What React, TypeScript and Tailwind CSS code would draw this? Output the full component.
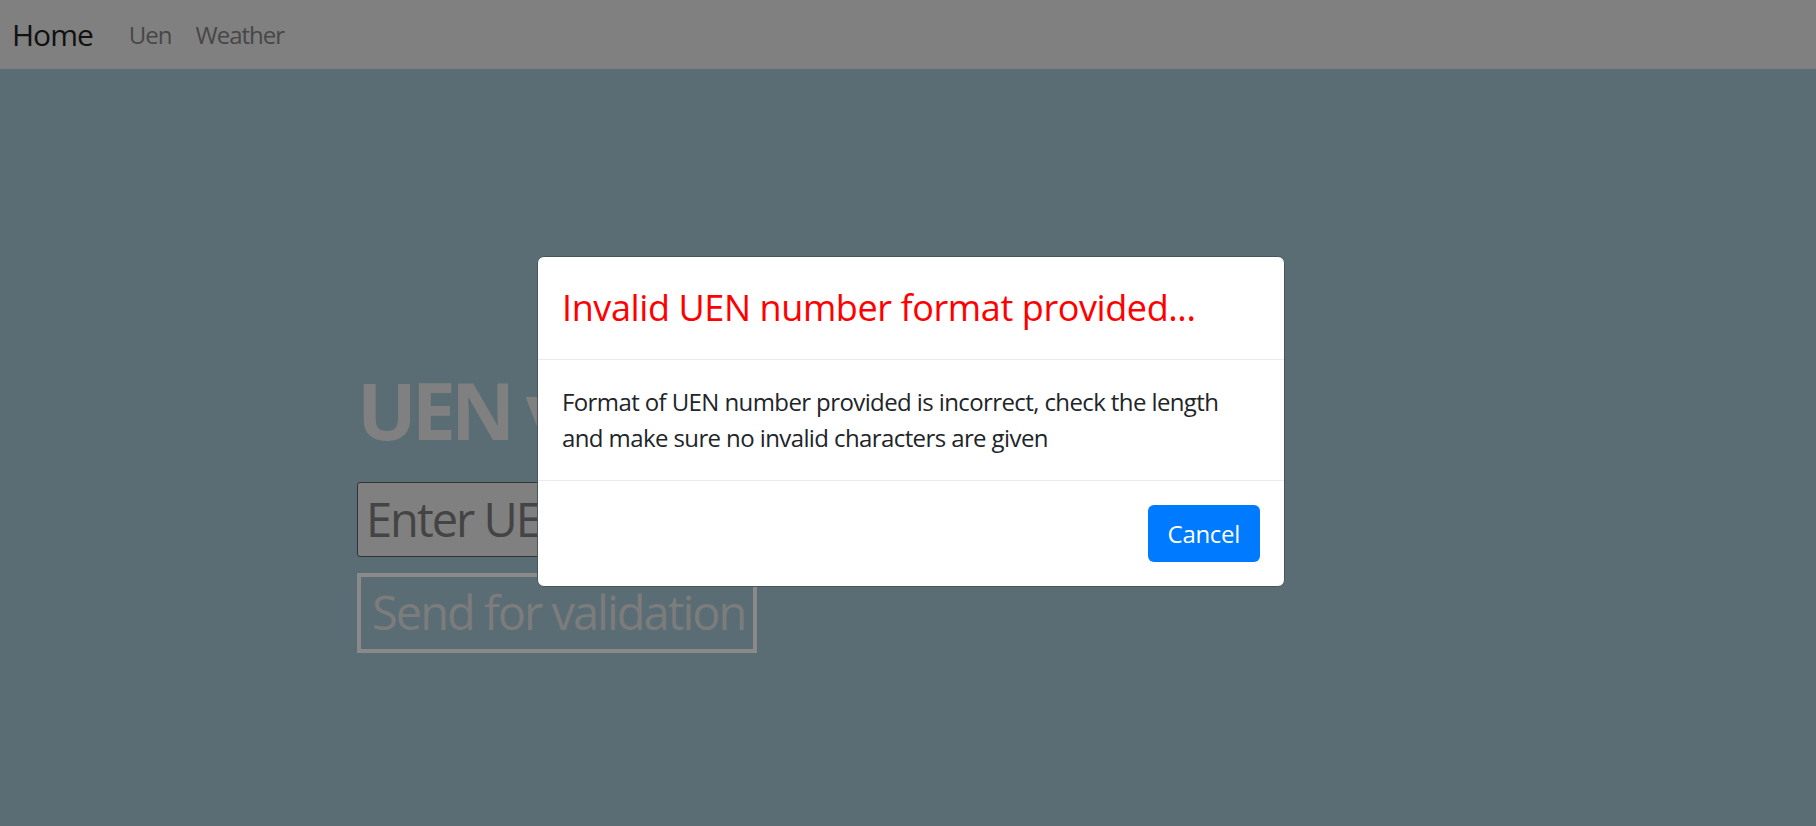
import React from "react";

const font = { fontFamily: '"Segoe UI", "Open Sans", "Noto Sans", sans-serif' };

function Navbar() {
  return (
    <nav className="flex h-[69px] items-center bg-[#808080] px-[12px]">
      <a href="#" className="mr-[24px] text-[30px] leading-[45px] tracking-[-1px] text-[#111111]">
        Home
      </a>
      <ul className="flex">
        <li>
          <a href="#" className="px-[12px] text-[24px] leading-[36px] tracking-[-1px] text-[#474747]">
            Uen
          </a>
        </li>
        <li>
          <a href="#" className="px-[12px] text-[24px] leading-[36px] tracking-[-1px] text-[#474747]">
            Weather
          </a>
        </li>
      </ul>
    </nav>
  );
}

function UenForm() {
  return (
    <main className="px-[357px] pt-[294px]">
      <h1 className="whitespace-nowrap text-[79px] font-bold leading-[1.2] tracking-[-5px] text-[#808080]">
        UEN validator
      </h1>
      <div className="mt-[24px] flex flex-col items-start gap-[16px]">
        <input
          placeholder="Enter UEN number"
          className="h-[75px] w-[600px] rounded-[3px] border-[1.5px] border-[#333333] bg-[#808080] px-[8px] text-[47px] tracking-[-2px] text-[#444444] placeholder:text-[#444444]"
        />
        <button className="h-[80px] w-[400px] whitespace-nowrap border-[4px] border-[#8a8a8a] px-[11px] text-left text-[47px] leading-none tracking-[-2px] text-[#7c7c7c]">
          Send for validation
        </button>
      </div>
    </main>
  );
}

function ErrorModal() {
  return (
    <div className="fixed inset-0 flex justify-center pl-[6px] pt-[256px]">
      <div className="h-fit w-[748px] rounded-[7px] border-[1.5px] border-[#46565c] bg-white">
        <div className="border-b-[1.5px] border-[#e9ecef] p-[24px]">
          <h4 className="text-[36px] font-medium leading-[54px] tracking-[-0.4px] text-[#ff0000]">
            Invalid UEN number format provided...
          </h4>
        </div>
        <div className="border-b-[1.5px] border-[#e9ecef] p-[24px] text-[24px] leading-[36px] tracking-[-0.6px] text-[#212529]">
          Format of UEN number provided is incorrect, check the length and make sure no invalid characters are given
        </div>
        <div className="flex justify-end p-[24px]">
          <button className="h-[57px] rounded-[6px] bg-[#007bff] px-[20px] text-[24px] leading-[36px] tracking-[-0.3px] text-white">
            Cancel
          </button>
        </div>
      </div>
    </div>
  );
}

export default function App() {
  return (
    <div className="h-[826px] overflow-hidden bg-[#5a6d74]" style={font}>
      <Navbar />
      <UenForm />
      <ErrorModal />
    </div>
  );
}
